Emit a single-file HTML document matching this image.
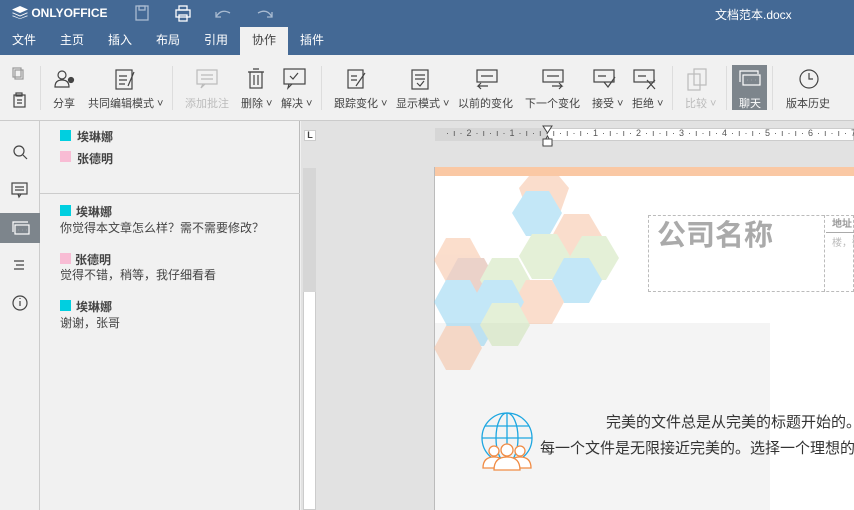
<!DOCTYPE html>
<html><head><meta charset="utf-8"><style>
*{margin:0;padding:0;box-sizing:border-box}
body{width:854px;height:510px;overflow:hidden;font-family:"Liberation Sans","Noto Sans CJK SC",sans-serif;background:#f1f1f1;position:relative;font-size:11px;color:#444}
.a{position:absolute}
.hdr{left:0;top:0;width:854px;height:55px;background:#446995}
.tab{top:27px;height:28px;line-height:26px;color:#fff;font-size:12px}
.tb{top:55px;left:0;width:854px;height:66px;background:#f1f1f1;border-bottom:1px solid #cbcbcb}
.lbl{top:95px;font-size:11px;color:#444;white-space:nowrap}
.sep{top:66px;width:1px;height:44px;background:#ddd}
.side{left:0;top:121px;width:40px;height:389px;background:#f1f1f1;border-right:1px solid #ccc}
.pan{left:40px;top:121px;width:260px;height:389px;background:#f1f1f1;border-right:1px solid #bbb}
.sq{width:11px;height:11px}
.nm{font-size:12px;font-weight:bold;color:#444}
.tx{font-size:12px;color:#444}
</style></head><body>
<div class="a hdr"></div>
<div class="a" style="left:12px;top:6px;color:#fff;font-weight:bold;font-size:12px">
<svg width="16" height="13" viewBox="0 0 16 13" style="vertical-align:-2px"><path d="M8 0L16 3.5 8 7 0 3.5z" fill="#fff"/><path d="M1 6.5L8 9.5 15 6.5 16 7 8 10.5 0 7z" fill="#fff"/><path d="M1 9.5L8 12.5 15 9.5 16 10 8 13 0 10z" fill="#fff"/></svg> ONLYOFFICE</div>
<svg class="a" style="left:134px;top:5px" width="150" height="18" fill="none" stroke="#a9bbd1" stroke-width="1.3"><rect x="2" y="1" width="12" height="14"/><rect x="5" y="1" width="6" height="4"/><g stroke="#fff"><rect x="42" y="5" width="14" height="7"/><rect x="45" y="1" width="8" height="4"/><rect x="45" y="10" width="8" height="6"/></g><path d="M82 12q5-9 14-4M82 7v5h5"/><path d="M138 12q-5-9-14-4M138 7v5h-5"/></svg>
<div class="a" style="left:715px;top:6px;color:#fff;font-size:12px">文档范本.docx</div>
<div class="a tab" style="left:12px">文件</div>
<div class="a tab" style="left:60px">主页</div>
<div class="a tab" style="left:108px">插入</div>
<div class="a tab" style="left:156px">布局</div>
<div class="a tab" style="left:204px">引用</div>
<div class="a tab" style="left:240px;width:48px;background:#f1f1f1;color:#444;text-align:center">协作</div>
<div class="a tab" style="left:300px">插件</div>
<div class="a tb"></div>
<svg class="a" style="left:0;top:60px" width="854" height="55" fill="none" stroke="#444" stroke-width="1.2">
<g stroke="#999"><rect x="15" y="10" width="8" height="9"/><rect x="13" y="8" width="8" height="9"/></g>
<rect x="14" y="35" width="11" height="12"/><rect x="16" y="33" width="6" height="3"/><path d="M17 40h5M17 43h5"/>
<circle cx="62" cy="15" r="4"/><path d="M55 27q0-7 7-7t7 7z"/><circle cx="71" cy="20" r="2.5" fill="#444"/>
<rect x="116" y="10" width="16" height="19"/><path d="M119 16h8M119 20h8M119 24h6M128 26l6-14"/>
<g stroke="#bbb"><rect x="197" y="10" width="20" height="14"/><path d="M201 15h12M201 19h12M203 24l-2 4 4-4"/></g>
<rect x="250" y="12" width="12" height="16"/><path d="M248 12h16M253 9h6M254 15v10M258 15v10"/>
<rect x="284" y="9" width="21" height="15"/><path d="M289 24l-1 4 4-4M290 16l3 3 5-6"/>
<rect x="348" y="10" width="15" height="18"/><path d="M351 16h6M351 20h6M356 26l9-13"/>
<rect x="412" y="10" width="16" height="19"/><path d="M415 15h10M415 19h10M417 23l3 3 4-5"/>
<rect x="477" y="10" width="20" height="12"/><path d="M481 16h12M488 26h-10l3-3M478 26l3 3"/>
<rect x="543" y="10" width="20" height="12"/><path d="M547 16h12M552 26h10l-3-3M562 26l-3 3"/>
<rect x="594" y="10" width="20" height="12"/><path d="M598 16h8M604 22l4 5 7-10"/>
<rect x="634" y="10" width="20" height="12"/><path d="M638 16h8M647 20l8 9M655 20l-8 9"/>
<g stroke="#bbb"><rect x="688" y="14" width="12" height="16"/><rect x="694" y="9" width="12" height="16"/></g>
<circle cx="809" cy="19" r="9"/><path d="M809 13v6h4"/>
</svg>
<div class="a" style="left:732px;top:65px;width:35px;height:45px;background:#7d858c"></div>
<svg class="a" style="left:738px;top:68px" width="24" height="22" fill="none" stroke="#fff" stroke-width="1.2"><path d="M2 14V3h18v3"/><rect x="5" y="7" width="17" height="10"/><path d="M9 12h.1M13 12h.1M17 12h.1" stroke-width="2"/></svg>
<div class="a sep" style="left:40px"></div><div class="a sep" style="left:172px"></div><div class="a sep" style="left:321px"></div><div class="a sep" style="left:672px"></div><div class="a sep" style="left:726px"></div><div class="a sep" style="left:772px"></div>
<div class="a lbl" style="left:53px">分享</div>
<div class="a lbl" style="left:88px">共同编辑模式 ˅</div>
<div class="a lbl" style="left:185px;color:#bbb">添加批注</div>
<div class="a lbl" style="left:241px">删除 ˅</div>
<div class="a lbl" style="left:281px">解决 ˅</div>
<div class="a lbl" style="left:334px">跟踪变化 ˅</div>
<div class="a lbl" style="left:396px">显示模式 ˅</div>
<div class="a lbl" style="left:458px">以前的变化</div>
<div class="a lbl" style="left:525px">下一个变化</div>
<div class="a lbl" style="left:592px">接受 ˅</div>
<div class="a lbl" style="left:632px">拒绝 ˅</div>
<div class="a lbl" style="left:685px;color:#bbb">比较 ˅</div>
<div class="a lbl" style="left:739px;color:#fff">聊天</div>
<div class="a lbl" style="left:786px">版本历史</div>
<div class="a side"></div>
<div class="a" style="left:0;top:213px;width:40px;height:30px;background:#7d858c"></div>
<svg class="a" style="left:0;top:121px" width="40" height="200" fill="none" stroke="#444" stroke-width="1.2">
<circle cx="19" cy="30" r="5"/><path d="M23 34l4 4"/>
<rect x="12" y="62" width="15" height="11"/><path d="M15 66h9M15 69h9M18 73l1 3 2-3"/>
<g stroke="#fff"><path d="M13 111V101h15"/><rect x="15" y="104" width="14" height="9"/><path d="M18 109h.1M22 109h.1M26 109h.1" stroke-width="2"/></g>
<path d="M14 140h10M16 144h8M14 148h10"/>
<circle cx="20" cy="182" r="7"/><path d="M20 180v5M20 177v1"/>
</svg>
<div class="a pan"></div>
<div class="a" style="left:40px;top:193px;width:260px;height:1px;background:#ccc"></div>
<div class="a sq" style="left:60px;top:130px;background:#00cfe0"></div><div class="a nm" style="left:77px;top:128px">埃琳娜</div>
<div class="a sq" style="left:60px;top:151px;background:#f8bcd4"></div><div class="a nm" style="left:77px;top:150px">张德明</div>
<div class="a sq" style="left:60px;top:205px;background:#00cfe0"></div><div class="a nm" style="left:76px;top:203px">埃琳娜</div>
<div class="a tx" style="left:60px;top:219px">你觉得本文章怎么样？需不需要修改？</div>
<div class="a sq" style="left:60px;top:253px;background:#f8bcd4"></div><div class="a nm" style="left:75px;top:251px">张德明</div>
<div class="a tx" style="left:60px;top:266px">觉得不错，稍等，我仔细看看</div>
<div class="a sq" style="left:60px;top:300px;background:#00cfe0"></div><div class="a nm" style="left:76px;top:298px">埃琳娜</div>
<div class="a tx" style="left:60px;top:314px">谢谢，张哥</div>
<div class="a" style="left:301px;top:121px;width:553px;height:389px;background:#e2e2e2"></div>
<div class="a" style="left:304px;top:130px;width:12px;height:11px;background:#fff;border:1px solid #ccc;font-size:9px;font-weight:bold;line-height:8px;text-align:center">L</div>
<div class="a" style="left:435px;top:128px;width:419px;height:13px;background:#fff;border:1px solid #ccc"></div>
<div class="a" style="left:435px;top:128px;width:113px;height:13px;background:#d6d6d6"></div>
<div class="a" style="left:440px;top:128px;width:414px;height:13px;overflow:hidden"><div style="padding-left:6px;font-size:9px;color:#555;letter-spacing:4px;white-space:nowrap">·ı·2·ı·ı·1·ı·ı·ı·ı·ı·1·ı·ı·2·ı·ı·3·ı·ı·4·ı·ı·5·ı·ı·6·ı·ı·7·ı·ı·8</div></div>
<svg class="a" style="left:542px;top:125px" width="12" height="22"><path d="M1 1h9L5.5 8z M1 19h9L5.5 11z" fill="#fff" stroke="#444"/><rect x="1" y="14" width="9" height="7" fill="#fff" stroke="#444"/></svg>
<div class="a" style="left:303px;top:168px;width:13px;height:342px;background:#fff;border:1px solid #ccc"></div>
<div class="a" style="left:303px;top:168px;width:13px;height:124px;background:#d6d6d6"></div>
<div class="a" style="left:434px;top:167px;width:420px;height:343px;background:#fff;border-left:1px solid #bbb"></div>
<div class="a" style="left:435px;top:167px;width:419px;height:9px;background:#fac8a4"></div>
<div class="a" style="left:435px;top:323px;width:335px;height:187px;background:#f4f4f4"></div>
<svg class="a" style="left:434px;top:176px" width="200" height="200">
<g opacity=".45">
<polygon points="95,0 125,0 135,12 125,40 95,40 85,12" fill="#f6b58f"/>
<polygon points="92,15 115,15 128,37 115,60 92,60 78,37" fill="#7ccbee"/>
<polygon points="130,38 155,38 168,60 155,83 130,83 118,60" fill="#f6b58f"/>
<polygon points="98,58 123,58 136,80 123,103 98,103 85,80" fill="#c4dea8"/>
<polygon points="148,60 172,60 185,82 172,104 148,104 135,82" fill="#c4dea8"/>
<polygon points="130,82 155,82 168,104 155,127 130,127 118,104" fill="#7ccbee"/>
<polygon points="12,62 36,62 48,84 36,106 12,106 0,84" fill="#f6b58f"/>
<polygon points="24,82 50,82 62,104 50,126 24,126 12,104" fill="#d59c88"/>
<polygon points="58,82 84,82 96,104 84,126 58,126 46,104" fill="#c4dea8"/>
<polygon points="92,104 118,104 130,126 118,148 92,148 80,126" fill="#f6b58f"/>
<polygon points="12,104 36,104 48,126 36,148 12,148 0,126" fill="#7ccbee"/>
<polygon points="50,104 78,104 90,126 78,148 50,148 38,126" fill="#7ccbee"/>
<polygon points="24,127 50,127 62,149 50,170 24,170 12,149" fill="#7ccbee"/>
<polygon points="58,127 84,127 96,149 84,170 58,170 46,149" fill="#c4dea8"/>
<polygon points="12,150 36,150 48,172 36,194 12,194 0,172" fill="#f6b58f"/>
</g></svg>
<div class="a" style="left:648px;top:215px;width:206px;height:77px;border:1px dashed #bbb"></div>
<div class="a" style="left:824px;top:215px;width:1px;height:77px;border-left:1px dashed #bbb"></div>
<div class="a" style="left:657px;top:212px;font-size:29px;font-weight:bold;color:#aaa;white-space:nowrap">公司名称</div>
<div class="a" style="left:832px;top:215px;font-size:10px;font-weight:bold;color:#999">地址</div>
<div class="a" style="left:826px;top:232px;width:28px;height:1px;background:#aaa"></div>
<div class="a" style="left:832px;top:234px;width:22px;overflow:hidden;font-size:10px;color:#bbb;white-space:nowrap">楼，街</div>
<svg class="a" style="left:474px;top:411px" width="60" height="62" fill="none" stroke-width="1.3">
<g stroke="#1ea7e1"><circle cx="33" cy="27" r="25"/><ellipse cx="33" cy="27" rx="11" ry="25"/><path d="M33 2v38M8 27h50M11 15h44"/></g>
<g stroke="#f08c45" fill="#fff"><circle cx="20" cy="40" r="5"/><circle cx="46" cy="40" r="5"/><path d="M9 57q0-11 11-11t11 11z M35 57q0-11 11-11t11 11z"/><circle cx="33" cy="39" r="6"/><path d="M20 59q0-13 13-13t13 13z"/></g></svg>
<div class="a" style="left:540px;top:405px;width:314px;height:60px;overflow:hidden">
<div class="a" style="left:66px;top:6px;font-size:15px;color:#333;white-space:nowrap">完美的文件总是从完美的标题开始的。</div>
<div class="a" style="left:0;top:32px;font-size:15px;color:#333;white-space:nowrap">每一个文件是无限接近完美的。选择一个理想的</div>
</div>
</body></html>
